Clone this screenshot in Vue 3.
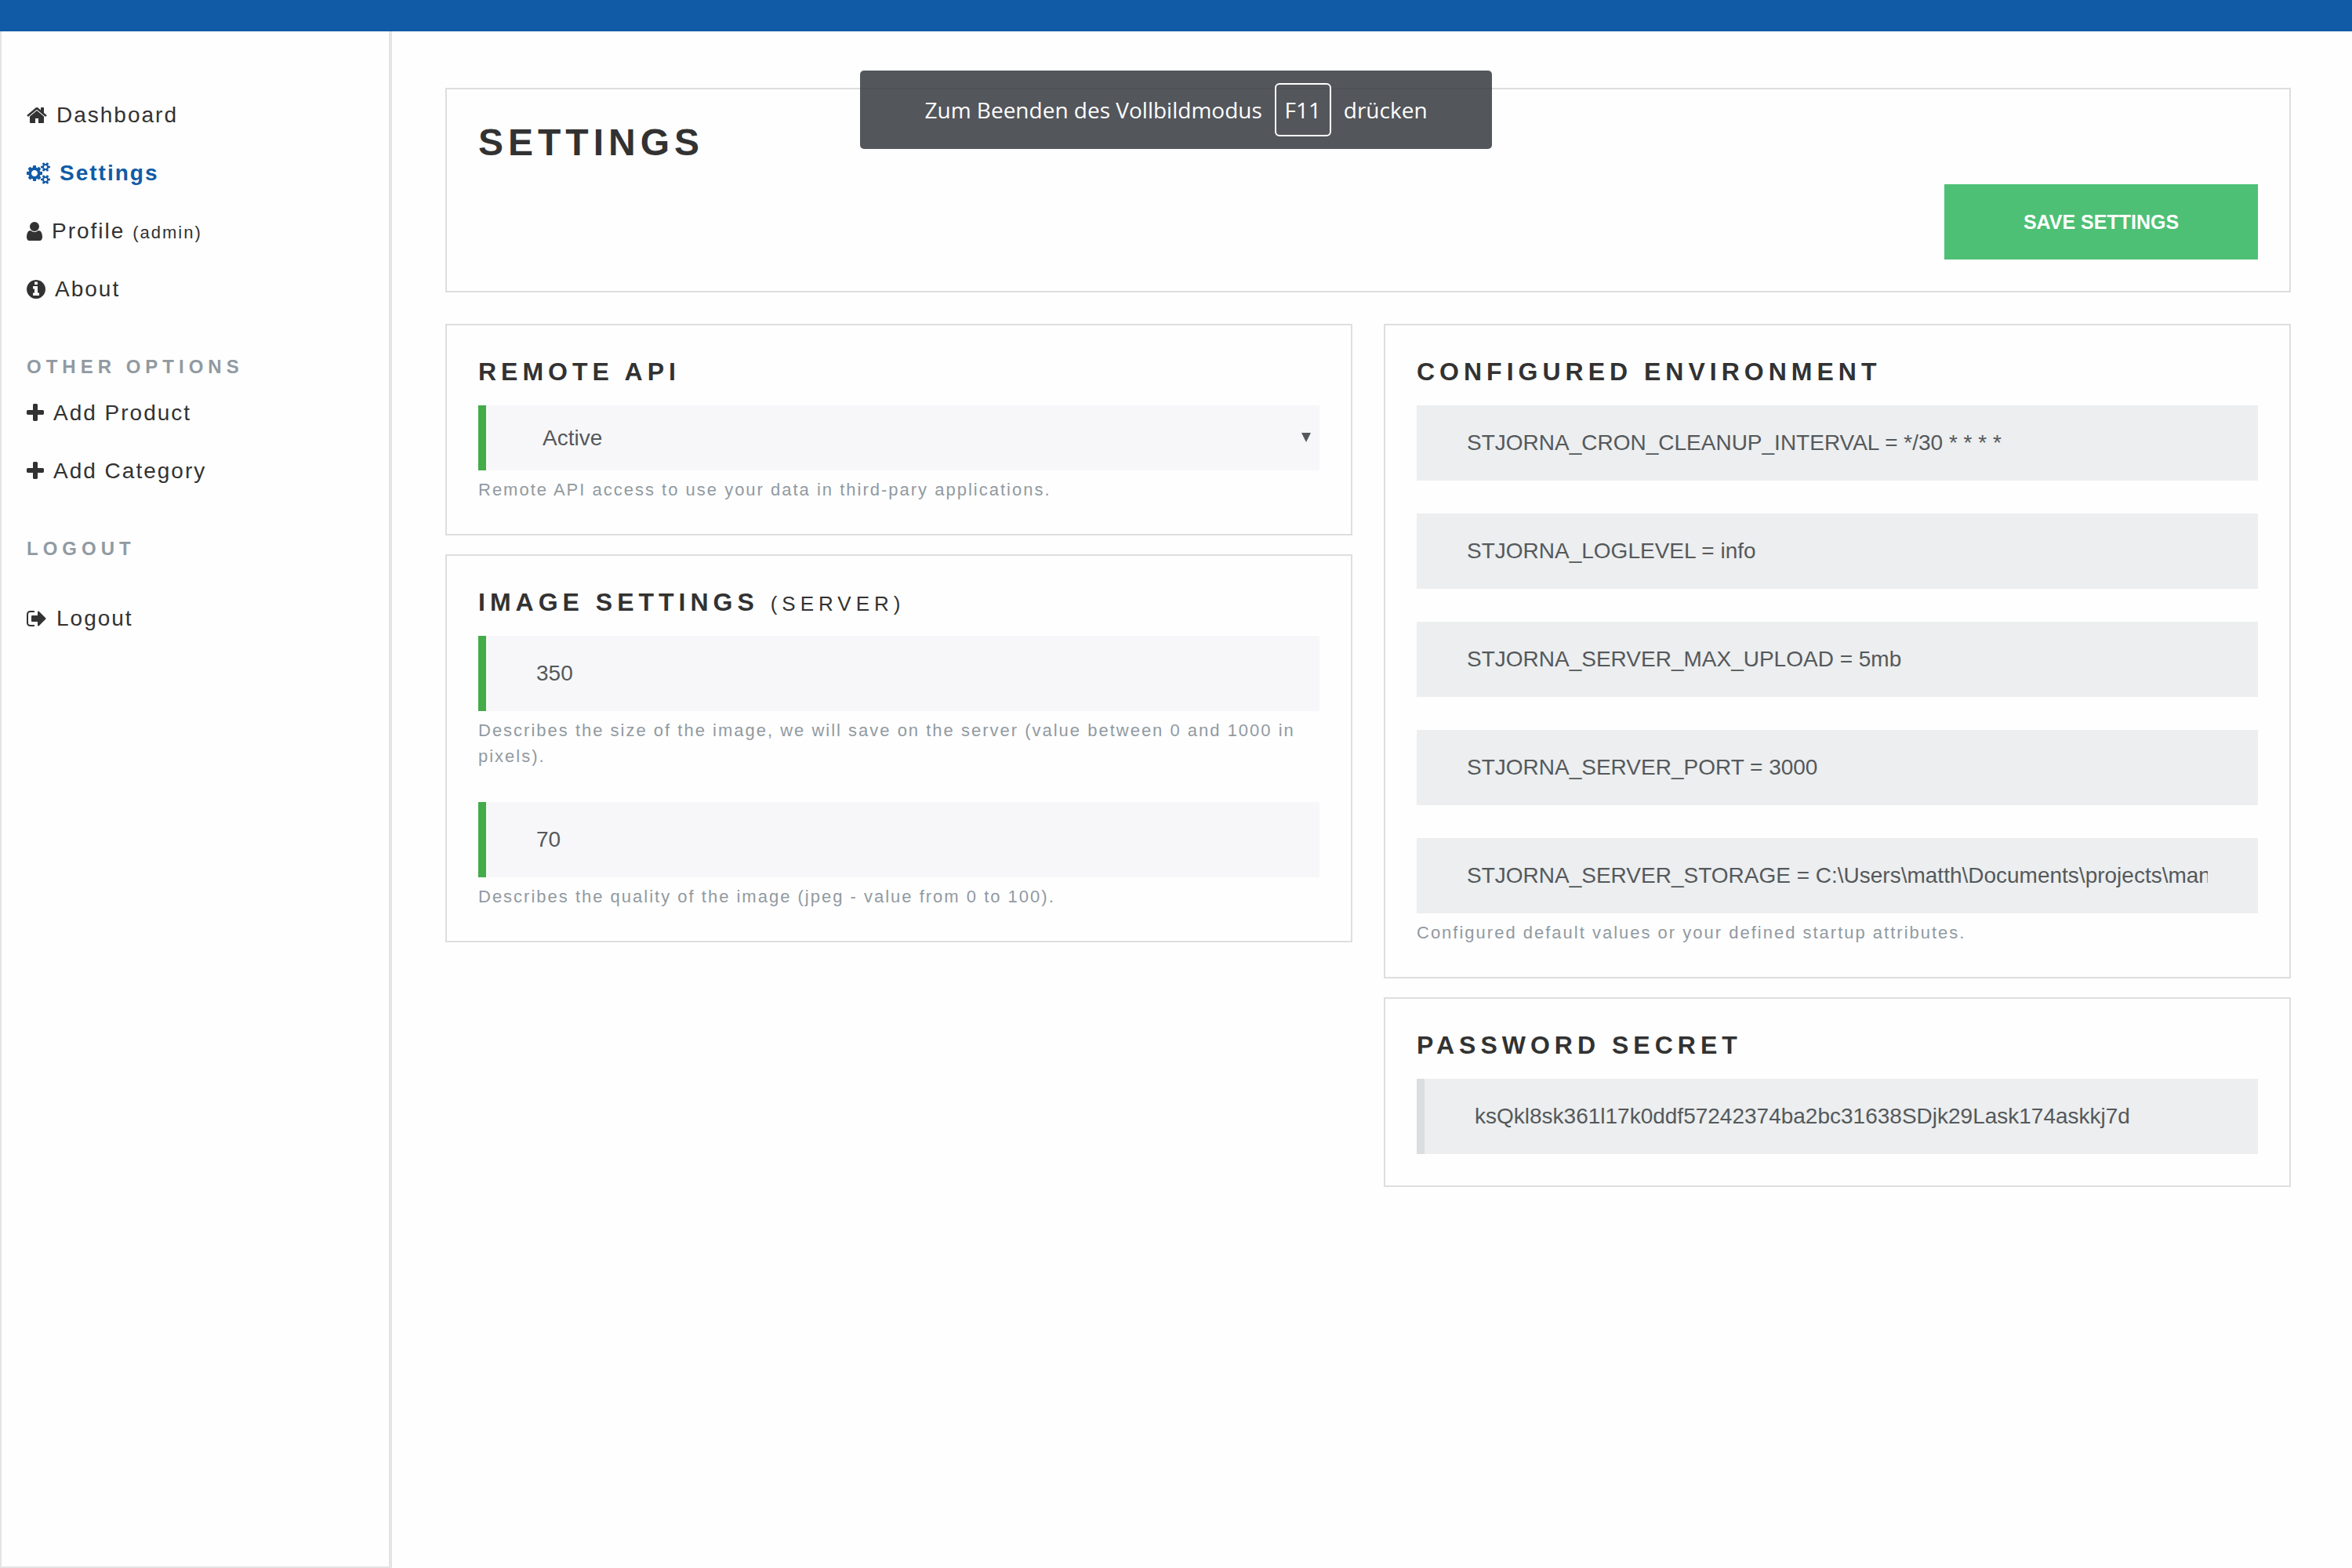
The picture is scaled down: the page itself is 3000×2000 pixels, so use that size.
<script setup>
import { ref } from 'vue'

const icons = {
  home: {
    width: 26,
    viewBox: '64 0 1664 1792',
    path: 'M1472 992v480q0 26-19 45t-45 19h-384v-384h-256v384h-384q-26 0-45-19t-19-45v-480q0-1 .5-3t.5-3l575-474 575 474q1 2 1 6zm223-69l-62 74q-8 9-21 11h-3q-13 0-21-7l-692-577-692 577q-12 8-24 7-13-2-21-11l-62-74q-8-10-7-23.5t11-21.5l719-599q32-26 76-26t76 26l244 204v-195q0-14 9-23t23-9h192q14 0 23 9t9 23v408l219 182q10 8 11 21.5t-7 23.5z',
  },
  cogs: {
    width: 30,
    viewBox: '-64 0 1920 1792',
    path: 'M832 896q0-106-75-181t-181-75-181 75-75 181 75 181 181 75 181-75 75-181zm768 512q0-52-38-90t-90-38-90 38-38 90q0 53 37.5 90.5t90.5 37.5 90.5-37.5 37.5-90.5zm0-1024q0-52-38-90t-90-38-90 38-38 90q0 53 37.5 90.5t90.5 37.5 90.5-37.5 37.5-90.5zm-384 421v185q0 10-7 19.5t-16 10.5l-155 24q-11 35-32 76 34 48 90 115 7 11 7 20 0 12-7 19-23 30-82.5 89.5t-78.5 59.5q-11 0-21-7l-115-90q-37 19-77 31-11 108-23 155-7 24-30 24h-186q-11 0-20-7.5t-10-17.5l-23-153q-34-10-75-31l-118 89q-7 7-20 7-11 0-21-8-144-133-144-160 0-9 7-19 10-14 41-53t47-61q-23-44-35-82l-152-24q-10-1-17-9.5t-7-19.5v-185q0-10 7-19.5t16-10.5l155-24q11-35 32-76-34-48-90-115-7-11-7-20 0-12 7-20 22-30 82-89t79-59q11 0 21 7l115 90q34-18 77-32 11-108 23-154 7-24 30-24h186q11 0 20 7.5t10 17.5l23 153q34 10 75 31l118-89q8-7 20-7 11 0 21 8 144 133 144 160 0 9-7 19-12 16-42 54t-45 60q23 48 34 82l152 23q10 2 17 10.5t7 19.5zm640 533v140q0 16-149 31-12 27-30 52 51 113 51 138 0 4-4 7-122 71-124 71-8 0-46-47t-52-68q-20 2-30 2t-30-2q-14 21-52 68t-46 47q-2 0-124-71-4-3-4-7 0-25 51-138-18-25-30-52-149-15-149-31v-140q0-16 149-31 13-29 30-52-51-113-51-138 0-4 4-7 4-2 35-20t59-34 30-16q8 0 46 46.5t52 67.5q20-2 30-2t30 2q51-71 92-112l6-2q4 0 124 70 4 3 4 7 0 25-51 138 17 23 30 52 149 15 149 31zm0-1024v140q0 16-149 31-12 27-30 52 51 113 51 138 0 4-4 7-122 71-124 71-8 0-46-47t-52-68q-20 2-30 2t-30-2q-14 21-52 68t-46 47q-2 0-124-71-4-3-4-7 0-25 51-138-18-25-30-52-149-15-149-31v-140q0-16 149-31 13-29 30-52-51-113-51-138 0-4 4-7 4-2 35-20t59-34 30-16q8 0 46 46.5t52 67.5q20-2 30-2t30 2q51-71 92-112l6-2q4 0 124 70 4 3 4 7 0 25-51 138 17 23 30 52 149 15 149 31z',
  },
  user: {
    width: 20,
    viewBox: '256 0 1280 1792',
    path: 'M1536 1399q0 109-62.5 187t-150.5 78h-854q-88 0-150.5-78t-62.5-187q0-85 8.5-160.5t31.5-152 58.5-131 94-89 134.5-34.5q131 128 313 128t313-128q76 0 134.5 34.5t94 89 58.5 131 31.5 152 8.5 160.5zm-256-887q0 159-112.5 271.5t-271.5 112.5-271.5-112.5-112.5-271.5 112.5-271.5 271.5-112.5 271.5 112.5 112.5 271.5z',
  },
  info: {
    width: 24,
    viewBox: '128 0 1536 1792',
    path: 'M1152 1376v-160q0-14-9-23t-23-9h-96v-512q0-14-9-23t-23-9h-320q-14 0-23 9t-9 23v160q0 14 9 23t23 9h96v320h-96q-14 0-23 9t-9 23v160q0 14 9 23t23 9h448q14 0 23-9t9-23zm-128-896v-160q0-14-9-23t-23-9h-192q-14 0-23 9t-9 23v160q0 14 9 23t23 9h192q14 0 23-9t9-23zm640 416q0 209-103 385.5t-279.5 279.5-385.5 103-385.5-103-279.5-279.5-103-385.5 103-385.5 279.5-279.5 385.5-103 385.5 103 279.5 279.5 103 385.5z',
  },
  plus: {
    width: 22,
    viewBox: '192 0 1408 1792',
    path: 'M1600 736v192q0 40-28 68t-68 28h-416v416q0 40-28 68t-68 28h-192q-40 0-68-28t-28-68v-416h-416q-40 0-68-28t-28-68v-192q0-40 28-68t68-28h416v-416q0-40 28-68t68-28h192q40 0 68 28t28 68v416h416q40 0 68 28t28 68z',
  },
  signOut: {
    width: 26,
    viewBox: '64 0 1664 1792',
    path: 'M704 1440q0 4 1 20t.5 26.5-3 23.5-10 19.5-20.5 6.5h-320q-119 0-203.5-84.5t-84.5-203.5v-704q0-119 84.5-203.5t203.5-84.5h320q13 0 22.5 9.5t9.5 22.5q0 4 1 20t.5 26.5-3 23.5-10 19.5-20.5 6.5h-320q-66 0-113 47t-47 113v704q0 66 47 113t113 47h312l11.5 1 11.5 3 8 5.5 7 9 2 13.5zm928-544q0 26-19 45l-544 544q-19 19-45 19t-45-19-19-45v-288h-448q-26 0-45-19t-19-45v-384q0-26 19-45t45-19h448v-288q0-26 19-45t45-19 45 19l544 544q19 19 19 45z',
  },
}

const sections = [
  {
    id: 'main',
    links: [
      { label: 'Dashboard', icon: icons.home },
      { label: 'Settings', icon: icons.cogs, active: true },
      { label: 'Profile', note: '(admin)', icon: icons.user },
      { label: 'About', icon: icons.info },
    ],
  },
  {
    id: 'options',
    title: 'Other options',
    links: [
      { label: 'Add Product', icon: icons.plus },
      { label: 'Add Category', icon: icons.plus },
    ],
  },
  {
    id: 'logout',
    title: 'Logout',
    links: [{ label: 'Logout', icon: icons.signOut }],
  },
]

const api = ref('active')
const imageSize = ref('350')
const imageQuality = ref('70')
const secret = 'ksQkl8sk361l17k0ddf57242374ba2bc31638SDjk29Lask174askkj7d'

const environment = [
  'STJORNA_CRON_CLEANUP_INTERVAL = */30 * * * *',
  'STJORNA_LOGLEVEL = info',
  'STJORNA_SERVER_MAX_UPLOAD = 5mb',
  'STJORNA_SERVER_PORT = 3000',
  'STJORNA_SERVER_STORAGE = C:\\Users\\matth\\Documents\\projects\\management',
]
</script>

<template>
  <div class="app">
    <header class="topbar"></header>

    <nav class="sidebar">
      <section v-for="section in sections" :key="section.id" :class="['group', section.id]">
        <h2 v-if="section.title" class="group-title">{{ section.title }}</h2>
        <ul class="links">
          <li v-for="link in section.links" :key="link.label">
            <a href="#" :class="['link', { active: link.active }]">
              <svg class="icon" :width="link.icon.width" height="28" :viewBox="link.icon.viewBox" aria-hidden="true">
                <path :d="link.icon.path" />
              </svg>
              <span>{{ link.label }} <small v-if="link.note">{{ link.note }}</small></span>
            </a>
          </li>
        </ul>
      </section>
    </nav>

    <main class="content">
      <section class="card title-card">
        <h1 class="title">Settings</h1>
        <button type="button" class="save">Save settings</button>
      </section>

      <div class="columns">
        <div class="column">
          <section class="card">
            <h2 class="heading">Remote API</h2>
            <div class="field">
              <div class="select-wrap">
                <select id="api" v-model="api" class="control select">
                  <option value="active">Active</option>
                  <option value="inactive">Inactive</option>
                </select>
                <svg class="arrow" width="12" height="12" viewBox="0 0 12 12" aria-hidden="true">
                  <path d="M0 0h12L6 12z" />
                </svg>
              </div>
              <label class="hint" for="api">Remote API access to use your data in third-pary applications.</label>
            </div>
          </section>

          <section class="card">
            <h2 class="heading">Image settings <small>(server)</small></h2>
            <div class="fields">
              <div class="field">
                <input id="size" v-model="imageSize" type="text" class="control" />
                <label class="hint" for="size">Describes the size of the image, we will save on the server (value between 0 and 1000 in pixels).</label>
              </div>
              <div class="field">
                <input id="quality" v-model="imageQuality" type="text" class="control" />
                <label class="hint" for="quality">Describes the quality of the image (jpeg - value from 0 to 100).</label>
              </div>
            </div>
          </section>
        </div>

        <div class="column">
          <section class="card">
            <h2 id="environment" class="heading">Configured environment</h2>
            <div class="field">
              <div class="fields">
                <input
                  v-for="entry in environment"
                  :key="entry"
                  type="text"
                  class="control readonly"
                  :value="entry"
                  aria-labelledby="environment"
                  readonly
                />
              </div>
              <p class="hint">Configured default values or your defined startup attributes.</p>
            </div>
          </section>

          <section class="card">
            <h2 class="heading"><label for="secret">Password secret</label></h2>
            <input id="secret" type="text" class="control readonly marked" :value="secret" readonly />
          </section>
        </div>
      </div>
    </main>

    <div class="toast" role="status">
      <span>Zum Beenden des Vollbildmodus</span>
      <kbd class="key">F11</kbd>
      <span>drücken</span>
    </div>
  </div>
</template>

<style>
body {
  margin: 0;
  background: #fefefe;
}
</style>

<style scoped>
.app {
  position: relative;
  display: grid;
  grid-template: 40px 1fr / 500px minmax(0, 1fr);
  min-height: 100vh;
  color: #323232;
  font-family: "Liberation Sans", Arial, sans-serif;
  font-size: 28px;
}

.app * {
  box-sizing: border-box;
}

.topbar {
  grid-column: 1 / -1;
  background: #115ba6;
}

.sidebar {
  display: flex;
  flex-direction: column;
  gap: 68px;
  padding: 90px 32px;
  border: solid #e4e4e4;
  border-width: 0 4px 2px 2px;
  letter-spacing: 2px;
}

.group {
  display: flex;
  flex-direction: column;
  gap: 28px;
}

.group.logout {
  gap: 58px;
}

.group-title {
  margin: 0;
  color: #919aa1;
  font-size: 24px;
  line-height: 28px;
  letter-spacing: 6px;
  text-transform: uppercase;
}

.links {
  display: flex;
  flex-direction: column;
  gap: 40px;
  margin: 0;
  padding: 0;
  list-style: none;
}

.link {
  display: flex;
  align-items: center;
  gap: 12px;
  color: inherit;
  line-height: 34px;
  text-decoration: none;
}

.link.active {
  color: #115ba6;
  font-weight: bold;
}

.link small {
  font-size: 22px;
  line-height: 1;
}

.icon {
  flex: none;
  fill: currentColor;
}

.content {
  display: flex;
  flex-direction: column;
  gap: 40px;
  padding: 72px 78px 72px 68px;
}

.card {
  padding: 40px;
  border: 2px solid #dedede;
}

.title-card {
  display: flex;
  flex-direction: column;
  gap: 25px;
}

.title {
  margin: 0;
  font-size: 48px;
  line-height: 56px;
  letter-spacing: 6px;
  text-transform: uppercase;
}

.save {
  align-self: flex-end;
  width: 400px;
  height: 96px;
  border: 0;
  background: #4dc075;
  color: #fff;
  font: bold 25px "Liberation Sans", Arial, sans-serif;
  text-transform: uppercase;
}

.columns {
  display: grid;
  grid-template-columns: repeat(2, minmax(0, 1fr));
  align-items: start;
  gap: 40px;
}

.column {
  display: flex;
  flex-direction: column;
  gap: 24px;
}

.heading {
  margin: 0 0 24px;
  font-size: 32px;
  line-height: 38px;
  letter-spacing: 6px;
  text-transform: uppercase;
}

.heading small {
  font-size: 26px;
  font-weight: normal;
  line-height: 1;
}

.fields {
  display: flex;
  flex-direction: column;
  gap: 42px;
}

.field {
  display: flex;
  flex-direction: column;
  gap: 8px;
}

.control {
  display: block;
  width: 100%;
  height: 96px;
  padding: 0 64px;
  border: 0;
  border-left: 10px solid #43ac49;
  border-radius: 0;
  outline: 0;
  background: #f7f7f9;
  color: #55595c;
  font: 28px "Liberation Sans", Arial, sans-serif;
}

.select-wrap {
  position: relative;
}

.select {
  height: 83px;
  padding: 0 72px;
  appearance: none;
}

.arrow {
  position: absolute;
  top: 35px;
  right: 11px;
  fill: #55595c;
  pointer-events: none;
}

.readonly {
  border-left: 0;
  background: #eceeef;
}

.marked {
  border-left: 10px solid #dcdddf;
}

.hint {
  margin: 0;
  color: #919aa1;
  font-size: 22px;
  line-height: 33px;
  letter-spacing: 2px;
}

.toast {
  position: absolute;
  top: 90px;
  left: 50%;
  display: flex;
  align-items: center;
  justify-content: center;
  gap: 16px;
  width: 806px;
  height: 100px;
  border-radius: 5px;
  background: rgba(53, 56, 62, 0.85);
  color: #fff;
  font-family: "Open Sans", "Noto Sans", sans-serif;
  font-size: 28px;
  transform: translateX(-50%);
}

.key {
  display: grid;
  place-items: center;
  width: 72px;
  height: 68px;
  border: 2px solid #fff;
  border-radius: 6px;
  font: inherit;
}
</style>
